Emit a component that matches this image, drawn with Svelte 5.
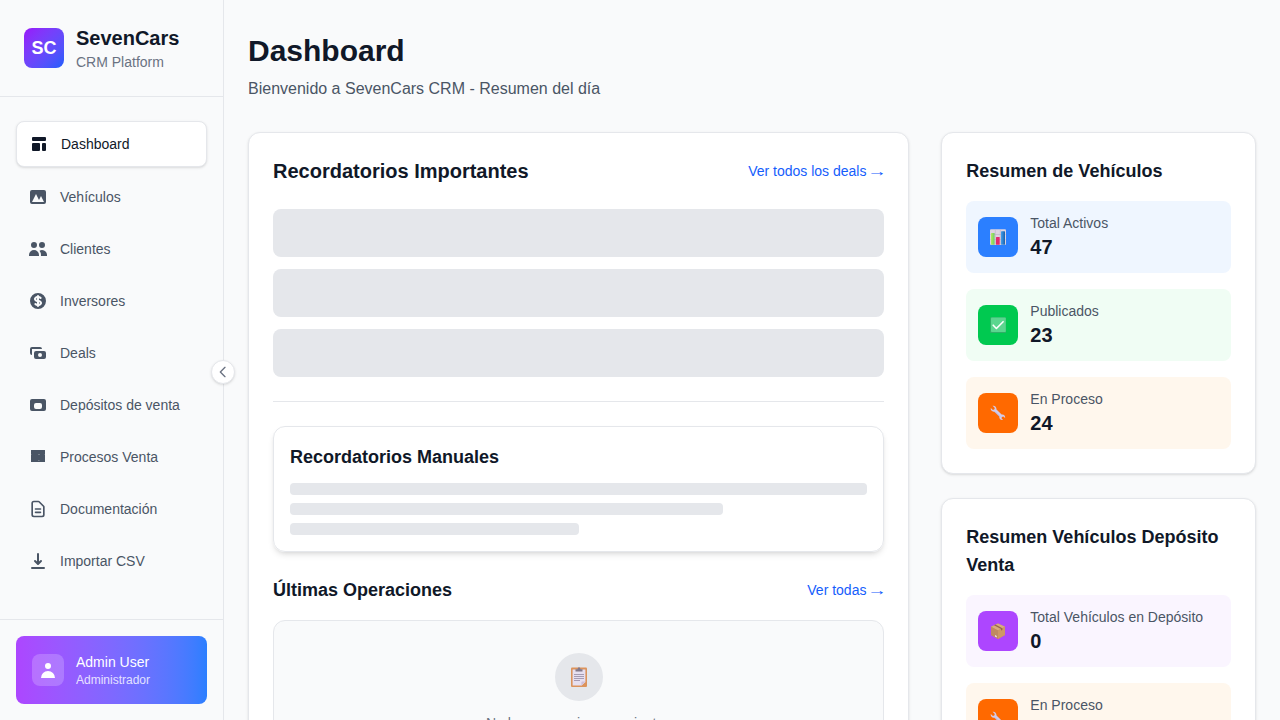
<script>
  const nav = [
    { label: 'Dashboard', active: true, d: 'M3 4a1 1 0 011-1h12a1 1 0 011 1v2a1 1 0 01-1 1H4a1 1 0 01-1-1V4zM3 10a1 1 0 011-1h6a1 1 0 011 1v6a1 1 0 01-1 1H4a1 1 0 01-1-1v-6zM14 9a1 1 0 00-1 1v6a1 1 0 001 1h2a1 1 0 001-1v-6a1 1 0 00-1-1h-2z' },
    { label: 'Vehículos', d: 'M4 3a2 2 0 00-2 2v10a2 2 0 002 2h12a2 2 0 002-2V5a2 2 0 00-2-2H4zm12 12H4l4-8 3 6 2-4 3 6z' },
    { label: 'Clientes', d: 'M9 6a3 3 0 11-6 0 3 3 0 016 0zM17 6a3 3 0 11-6 0 3 3 0 016 0zM12.93 17c.046-.327.07-.66.07-1a6.97 6.97 0 00-1.5-4.33A5 5 0 0119 16v1h-6.07zM6 11a5 5 0 015 5v1H1v-1a5 5 0 015-5z' },
    { label: 'Inversores', d: 'M8.433 7.418c.155-.103.346-.196.567-.267v1.698a2.305 2.305 0 01-.567-.267C8.07 8.34 8 8.114 8 8c0-.114.07-.34.433-.582zM11 12.849v-1.698c.22.071.412.164.567.267.364.243.433.468.433.582 0 .114-.07.34-.433.582a2.305 2.305 0 01-.567.267zM10 18a8 8 0 100-16 8 8 0 000 16zm1-13a1 1 0 10-2 0v.092a4.535 4.535 0 00-1.676.662C6.602 6.234 6 7.009 6 8c0 .99.602 1.765 1.324 2.246.48.32 1.054.545 1.676.662v1.941c-.391-.127-.68-.317-.843-.504a1 1 0 10-1.51 1.31c.562.649 1.413 1.076 2.353 1.253V15a1 1 0 102 0v-.092a4.535 4.535 0 001.676-.662C13.398 13.766 14 12.991 14 12c0-.99-.602-1.765-1.324-2.246A4.535 4.535 0 0011 9.092V7.151c.391.127.68.317.843.504a1 1 0 101.511-1.31c-.563-.649-1.413-1.076-2.354-1.253V5z' },
    { label: 'Deals', d: 'M4 4a2 2 0 00-2 2v4a2 2 0 002 2V6h10a2 2 0 00-2-2H4zm2 6a2 2 0 012-2h8a2 2 0 012 2v4a2 2 0 01-2 2H8a2 2 0 01-2-2v-4zm6 4a2 2 0 100-4 2 2 0 000 4z' },
    { label: 'Depósitos de venta', d: 'M2 6a2 2 0 012-2h12a2 2 0 012 2v8a2 2 0 01-2 2H4a2 2 0 01-2-2V6zm6 2a2 2 0 00-2 2v2a2 2 0 002 2h4a2 2 0 002-2v-2a2 2 0 00-2-2H8z' },
    { label: 'Procesos Venta', d: 'M3.2 3h13.6l.2.2v3.8h-.6v.2h.6V15H3V7.2h.6V7H3V3.200zM10 7v.2h2V7zM10 13.600v.2h1.600v-.2z' },
    { label: 'Documentación', outline: true, d: 'M9 12h6m-6 4h6m2 5H7a2 2 0 01-2-2V5a2 2 0 012-2h5.586a1 1 0 01.707.293l5.414 5.414a1 1 0 01.293.707V19a2 2 0 01-2 2z' },
    { label: 'Importar CSV', d: 'M3 17a1 1 0 011-1h12a1 1 0 110 2H4a1 1 0 01-1-1zm3.293-7.707a1 1 0 011.414 0L9 10.586V3a1 1 0 112 0v7.586l1.293-1.293a1 1 0 111.414 1.414l-3 3a1 1 0 01-1.414 0l-3-3a1 1 0 010-1.414z' }
  ];

  const summaries = [
    {
      title: 'Resumen de Vehículos',
      stats: [
        { label: 'Total Activos', value: 47, icon: 'chart', tone: 'blue' },
        { label: 'Publicados', value: 23, icon: 'check', tone: 'green' },
        { label: 'En Proceso', value: 24, icon: 'wrench', tone: 'orange' }
      ]
    },
    {
      title: 'Resumen Vehículos Depósito Venta',
      stats: [
        { label: 'Total Vehículos en Depósito', value: 0, icon: 'box', tone: 'purple' },
        { label: 'En Proceso', value: 0, icon: 'wrench', tone: 'orange' }
      ]
    }
  ];
</script>

{#snippet glyph(name)}
  <svg width="16" height="16" viewBox="0 0 16 16">
    {#if name === 'chart'}
      <defs>
        <linearGradient id="bar-g" x1="0" x2="1"><stop offset="0" stop-color="#b4ec5a" /><stop offset="1" stop-color="#6fc96a" /></linearGradient>
        <linearGradient id="bar-b" x1="0" x2="1"><stop offset="0" stop-color="#3fa0ee" /><stop offset="1" stop-color="#1d5fa8" /></linearGradient>
      </defs>
      <rect x="0" y="0.3" width="16" height="15.7" rx="1" fill="#dcd3e2" />
      <path d="M.5 5.5h15M.5 10.5h15M5.3.8v14.7M10.3.8v14.7" stroke="#b9afc6" stroke-width=".6" />
      <rect x="1" y="4" width="3.6" height="11.7" rx=".5" fill="url(#bar-g)" />
      <rect x="6" y="8" width="3.7" height="7.7" rx=".5" fill="#e32a6c" />
      <rect x="11" y="2.3" width="4" height="13.4" rx=".5" fill="url(#bar-b)" />
    {:else if name === 'check'}
      <rect x="0" y="0.3" width="16" height="15.7" rx="1" fill="#2fae66" />
      <rect x="1" y="0.6" width="14.8" height="14.4" rx=".8" fill="#5bd68f" />
      <path d="M3.2 8.2l3.2 3.3 6.7-6.8" fill="none" stroke="#fff" stroke-width="1.6" stroke-linecap="round" stroke-linejoin="round" />
    {:else if name === 'wrench'}
      <path d="M2.6.8L4.8 3l-.5 1.500L2.900 5 .8 3.100C.4 5.300 1.900 7 4.300 6.700L9.300 11.500C9 13.700 10.700 15.400 13 14.900L11.500 13.300l.4-1.400 1.400-.4 1.800 1.500c.5-2.200-1.300-3.900-3.500-3.500L6.500 4.500C6.600 2.200 4.900.4 2.600.8z" fill="#d2cbea" />
      <path d="M5 6.700l4.900 4.900" stroke="#a79cc4" stroke-width=".6" />
    {:else}
      <path d="M8 .4L15 3.800v8.300L8 15.900 1 12.100V3.800z" fill="#c58d5e" />
      <path d="M8 .4L15 3.800 8 7.400 1 3.800z" fill="#d9ab80" />
      <path d="M8 7.400l7-3.600v8.300l-7 3.800z" fill="#cf9866" />
      <path d="M1 3.800l7 3.600v8.500l-7-3.800z" fill="#c08a62" />
      <path d="M4 2.300l1.400-.7 7 3.600v1.700l-1.400.7V5.900z" fill="#96664e" />
      <path d="M5 12l1.800 1v1.400L5 13.400z" fill="#ebe2ee" />
    {/if}
  </svg>
{/snippet}

<div class="app">
  <aside>
    <header class="brand">
      <div class="logo">SC</div>
      <div>
        <div class="brand-name">SevenCars</div>
        <div class="brand-sub">CRM Platform</div>
      </div>
    </header>

    <nav>
      {#each nav as item}
        <a class="nav-item" class:active={item.active} href="#top">
          {#if item.outline}
            <svg width="20" height="20" viewBox="0 0 24 24" fill="none" stroke="currentColor" stroke-width="2" stroke-linecap="round" stroke-linejoin="round"><path d={item.d} /></svg>
          {:else}
            <svg width="20" height="20" viewBox="0 0 20 20" fill="currentColor"><path fill-rule="evenodd" d={item.d} /></svg>
          {/if}
          <span>{item.label}</span>
        </a>
      {/each}
    </nav>

    <footer>
      <div class="user">
        <div class="avatar">
          <svg width="20" height="20" viewBox="0 0 20 20" fill="currentColor"><path fill-rule="evenodd" d="M10 9a3 3 0 100-6 3 3 0 000 6zm-7 9a7 7 0 1114 0H3z" /></svg>
        </div>
        <div>
          <div class="user-name">Admin User</div>
          <div class="user-role">Administrador</div>
        </div>
      </div>
    </footer>

    <button class="toggle" aria-label="Contraer menú">
      <svg width="16" height="16" viewBox="0 0 24 24" fill="none" stroke="currentColor" stroke-width="2" stroke-linecap="round" stroke-linejoin="round"><path d="M15 19l-7-7 7-7" /></svg>
    </button>
  </aside>

  <main>
    <h1>Dashboard</h1>
    <p class="lead">Bienvenido a SevenCars CRM - Resumen del día</p>

    <div class="grid">
      <section class="card">
        <div class="row-head main-head">
          <h2>Recordatorios Importantes</h2>
          <a class="link" href="#top">Ver todos los deals <span class="arrow">→</span></a>
        </div>
        <div class="blocks">
          <div class="block"></div>
          <div class="block"></div>
          <div class="block"></div>
        </div>
        <div class="divided">
          <div class="manual">
            <h3>Recordatorios Manuales</h3>
            <div class="lines">
              <div class="line"></div>
              <div class="line w75"></div>
              <div class="line w50"></div>
            </div>
          </div>
          <div class="row-head ops-head">
            <h3>Últimas Operaciones</h3>
            <a class="link" href="#top">Ver todas <span class="arrow">→</span></a>
          </div>
          <div class="empty">
            <div class="empty-icon">
              <svg width="16" height="20" viewBox="0 0 16 20">
                <rect x="0" y=".6" width="16" height="19.4" rx="1" fill="#dc935c" />
                <path d="M1.600 2.600h12.800v12.600l-3.600 3.400H1.600z" fill="#e6dff0" />
                <path d="M14.400 14.600l-4 4V15.600a1 1 0 011-1z" fill="#cdbfda" />
                <path d="M14.400 15.200l-3.600 3.600h3.600z" fill="#dc935c" />
                <path d="M3 7.500h10M3 9.500h10M3 11.500h10M3 13.500h6" stroke="#9d93ab" stroke-width=".9" />
                <path d="M4.500 4.500V2.200h2L7 .8Q8-.4 9 .8l.5 1.400h2v2.300z" fill="#81788a" />
              </svg>
            </div>
            <p>No hay operaciones recientes</p>
          </div>
        </div>
      </section>

      <div class="side">
        {#each summaries as s}
          <section class="card">
            <h3>{s.title}</h3>
            <div class="stats">
              {#each s.stats as st}
                <div class="stat {st.tone}">
                  <div class="stat-icon">{@render glyph(st.icon)}</div>
                  <div>
                    <div class="stat-label">{st.label}</div>
                    <div class="stat-value">{st.value}</div>
                  </div>
                </div>
              {/each}
            </div>
          </section>
        {/each}
      </div>
    </div>
  </main>
</div>

<style>
  :global(body) { background: #f9fafb; overflow: hidden; }
  :global(*) { box-sizing: border-box; }
  h1, h2, h3, p { margin: 0; }
  a { text-decoration: none; }
  svg { display: block; flex: none; }
  .app {
    display: flex;
    height: 720px;
    overflow: hidden;
    font-family: "Liberation Sans", Arial, sans-serif;
    font-size: 16px;
    line-height: 24px;
    color: #101828;
    background: #f9fafb;
  }
  aside {
    position: relative;
    flex: none;
    display: flex;
    flex-direction: column;
    width: 224px;
    border-right: 1px solid #e5e7eb;
  }
  .brand {
    display: flex;
    align-items: center;
    gap: 12px;
    padding: 24px;
    border-bottom: 1px solid #e5e7eb;
  }
  .logo {
    display: grid;
    place-items: center;
    width: 40px;
    height: 40px;
    border-radius: 8px;
    background: linear-gradient(to bottom right in oklab, #9810fa, #155dfc);
    color: #fff;
    font-size: 18px;
    font-weight: 700;
  }
  .brand-name { font-size: 20px; line-height: 28px; font-weight: 700; }
  .brand-sub { font-size: 14px; line-height: 20px; color: #6a7282; }
  nav {
    flex: 1;
    display: flex;
    flex-direction: column;
    gap: 8px;
    padding: 24px 16px;
  }
  .nav-item {
    display: flex;
    align-items: center;
    gap: 12px;
    padding: 12px;
    border-radius: 8px;
    font-size: 14px;
    line-height: 20px;
    color: #4a5565;
  }
  .active {
    background: #fff;
    border: 1px solid #e5e7eb;
    color: #101828;
    box-shadow: 0 1px 3px rgb(0 0 0 / 0.1), 0 1px 2px -1px rgb(0 0 0 / 0.1);
  }
  footer { padding: 16px; border-top: 1px solid #e5e7eb; }
  .user {
    display: flex;
    align-items: center;
    gap: 12px;
    padding: 16px;
    border-radius: 8px;
    background: linear-gradient(to right in oklab, #ad46ff, #2b7fff);
    color: #fff;
  }
  .avatar {
    display: grid;
    place-items: center;
    width: 32px;
    height: 32px;
    border-radius: 8px;
    background: rgb(255 255 255 / 0.2);
  }
  .user-name { font-size: 14px; line-height: 20px; }
  .user-role { font-size: 12px; line-height: 16px; opacity: 0.8; }
  .toggle {
    position: absolute;
    top: 360px;
    right: -12px;
    display: grid;
    place-items: center;
    width: 24px;
    height: 24px;
    padding: 0;
    border: 1px solid #e5e7eb;
    border-radius: 50%;
    background: #fff;
    color: #6a7282;
    box-shadow: 0 1px 3px rgb(0 0 0 / 0.1), 0 1px 2px -1px rgb(0 0 0 / 0.1);
  }
  main { flex: 1; min-width: 0; padding: 33px 24px; }
  h1 { font-size: 30px; line-height: 36px; }
  .lead { margin-top: 8px; color: #4a5565; }
  .grid {
    display: grid;
    grid-template-columns: repeat(3, minmax(0, 1fr));
    gap: 32px;
    align-items: start;
    margin-top: 31px;
  }
  .grid > .card { grid-column: span 2; }
  .card {
    padding: 24px;
    border: 1px solid #e5e7eb;
    border-radius: 12px;
    background: #fff;
    box-shadow: 0 1px 3px rgb(0 0 0 / 0.1), 0 1px 2px -1px rgb(0 0 0 / 0.1);
  }
  .row-head { display: flex; align-items: center; justify-content: space-between; }
  .main-head { margin-bottom: 24px; }
  h2 { font-size: 20px; line-height: 28px; }
  h3 { font-size: 18px; line-height: 28px; }
  .link { font-size: 14px; line-height: 20px; color: #155dfc; white-space: nowrap; }
  .arrow {
    display: inline-block;
    width: 14px;
    transform: scaleX(1.4);
  }
  .blocks { display: flex; flex-direction: column; gap: 12px; }
  .block { height: 48px; border-radius: 8px; background: #e5e7eb; }
  .divided { margin-top: 24px; padding-top: 24px; border-top: 1px solid #e5e7eb; }
  .manual {
    padding: 16px;
    border: 1px solid #e5e7eb;
    border-radius: 12px;
    box-shadow: 0 4px 6px -1px rgb(0 0 0 / 0.1), 0 2px 4px -2px rgb(0 0 0 / 0.1);
  }
  .lines { display: flex; flex-direction: column; gap: 8px; margin-top: 12px; }
  .line { height: 12px; border-radius: 4px; background: #e5e7eb; }
  .w75 { width: 75%; }
  .w50 { width: 50%; }
  .ops-head { margin: 24px 0 16px; }
  .empty {
    display: flex;
    flex-direction: column;
    align-items: center;
    padding: 32px;
    border: 1px solid #e5e7eb;
    border-radius: 12px;
    background: #f9fafb;
    font-size: 14px;
    line-height: 20px;
    color: #6a7282;
  }
  .empty-icon {
    display: grid;
    place-items: center;
    width: 48px;
    height: 48px;
    margin-bottom: 12px;
    border-radius: 50%;
    background: #e5e7eb;
  }
  .side { display: flex; flex-direction: column; gap: 24px; }
  .stats { display: flex; flex-direction: column; gap: 16px; margin-top: 16px; }
  .stat { display: flex; align-items: center; gap: 12px; padding: 12px; border-radius: 8px; }
  .stat-icon {
    display: grid;
    place-items: center;
    width: 40px;
    height: 40px;
    border-radius: 8px;
  }
  .stat-label { font-size: 14px; line-height: 20px; color: #4a5565; }
  .stat-value { font-size: 20px; line-height: 28px; font-weight: 700; }
  .blue { background: #eff6ff; }
  .blue .stat-icon { background: #2b7fff; }
  .green { background: #f0fdf4; }
  .green .stat-icon { background: #00c950; }
  .orange { background: #fff7ed; }
  .orange .stat-icon { background: #ff6900; }
  .purple { background: #faf5ff; }
  .purple .stat-icon { background: #ad46ff; }
</style>
